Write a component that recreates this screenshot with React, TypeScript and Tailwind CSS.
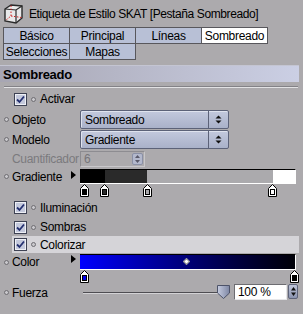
import { FunctionComponent } from "react";

const Dot: FunctionComponent = () => (
  <span className="inline-block w-[5px] h-[5px] rounded-full border border-[#6e6d72] bg-[#c9c8cc] shrink-0" />
);

const Check: FunctionComponent = () => (
  <svg width="13" height="13" viewBox="0 0 13 13" className="shrink-0">
    <rect x="0.5" y="0.5" width="12" height="12" fill="#c4c9dc" stroke="#3e4254" />
    <rect x="1.5" y="1.5" width="10" height="10" fill="none" stroke="#eef0f6" strokeWidth="1" />
    <path d="M3 6.5 L5.5 9 L10 3.5" fill="none" stroke="#243070" strokeWidth="1.8" />
  </svg>
);

const Arrows: FunctionComponent = () => (
  <svg width="7" height="9" viewBox="0 0 7 9">
    <path d="M3.5 0.5 L6.5 3.5 H0.5 Z" fill="#111" />
    <path d="M3.5 8.5 L6.5 5.5 H0.5 Z" fill="#111" />
  </svg>
);

const Knot: FunctionComponent<{ x: number; color: string }> = ({ x, color }) => (
  <svg
    width="9"
    height="13"
    viewBox="0 0 9 13"
    className="absolute top-0"
    style={{ left: x - 4 }}
  >
    <path d="M4.5 0.5 L8.5 4.5 V12.5 H0.5 V4.5 Z" fill="#fff" stroke="#000" />
    <rect x="2.5" y="5.5" width="4" height="5" fill={color} stroke="#000" />
  </svg>
);

const Select: FunctionComponent<{ value: string }> = ({ value }) => (
  <div className="flex h-[19px] w-[149px] border border-[#5c6278] rounded-[2px] bg-gradient-to-b from-[#c3c9dd] to-[#a9b1c9] shadow-[inset_1px_1px_0_#dfe3ee]">
    <div className="flex-1 flex items-center pl-[4px]">{value}</div>
    <div className="w-[20px] border-l border-[#5c6278] flex items-center justify-center">
      <Arrows />
    </div>
  </div>
);

const Label: FunctionComponent<{ text: string; dim?: boolean }> = ({ text, dim }) => (
  <div className="w-[80px] flex items-center gap-[3px] pl-[4px] shrink-0">
    {dim ? <span className="w-[5px]" /> : <Dot />}
    <span className={dim ? "text-[#7b7a7e]" : ""}>{text}</span>
  </div>
);

export default function App() {
  const tab =
    "h-[17px] w-[67px] -ml-px -mt-px border border-[#58575c] flex items-center justify-center";
  return (
    <div className="w-[303px] h-[314px] bg-[#acaaad] overflow-hidden text-[12px] leading-none tracking-[-0.3px] text-black font-['Liberation_Sans',sans-serif]">
      <div className="h-[27px] flex items-center pl-[3px] gap-[5px]">
        <svg width="21" height="21" viewBox="0 0 21 21">
          <path d="M2 6 L8 2 L19 3 L19 15 L13 20 L2 18 Z" fill="#e9e9ea" stroke="#2a2a2a" strokeWidth="1.4" />
          <path d="M2 6 L13 7 L19 3 M13 7 L13 20" fill="none" stroke="#2a2a2a" strokeWidth="1.2" />
          <path d="M8 2.5 L8 13 L2.5 17.5 M8 13 L18.5 14.5" fill="none" stroke="#d02020" strokeWidth="1" strokeDasharray="1.5 1.5" />
        </svg>
        <span className="text-[12px] tracking-[-0.4px]">Etiqueta de Estilo SKAT [Pestaña Sombreado]</span>
      </div>

      <div className="pl-[4px] pt-[1px] w-[272px] flex flex-wrap">
        <div className={`${tab} bg-[#b8c0d6]`}>Básico</div>
        <div className={`${tab} bg-[#b8c0d6]`}>Principal</div>
        <div className={`${tab} bg-[#b8c0d6]`}>Líneas</div>
        <div className={`${tab} bg-white`}>Sombreado</div>
        <div className={`${tab} bg-[#b8c0d6]`}>Selecciones</div>
        <div className={`${tab} bg-[#b8c0d6]`}>Mapas</div>
      </div>

      <div className="mt-[5px] h-[17px] w-[299px] flex items-center pl-[3px] font-bold text-[13px] bg-gradient-to-r from-[#a7a6b3] to-[#cbcfe4] border-t border-[#c4c5d2]">
        Sombreado
      </div>
      <div className="mt-[4px] ml-[4px] w-[294px] h-[2px] border-t border-[#838287] border-b border-b-[#e2e2e4]" />

      <div className="h-[22px] flex items-center pl-[14px] gap-[4px]">
        <Check />
        <Dot />
        <span>Activar</span>
      </div>

      <div className="h-[19px] flex items-center">
        <Label text="Objeto" />
        <Select value="Sombreado" />
      </div>
      <div className="mt-[1px] h-[19px] flex items-center">
        <Label text="Modelo" />
        <Select value="Gradiente" />
      </div>

      <div className="mt-[1px] h-[17px] flex items-center">
        <Label text="Cuantificador" dim />
        <div className="flex h-[16px] w-[65px] border border-[#8d8c91] border-b-[#c8c7ca] border-r-[#c8c7ca]">
          <div className="flex-1 pl-[3px] flex items-center text-[#76757a]">6</div>
          <div className="w-[11px] my-[1px] mr-[1px] rounded-[2px] bg-[#b3b8cc] border border-[#8a90a6] flex items-center justify-center">
            <svg width="5" height="8" viewBox="0 0 5 8">
              <path d="M2.5 0 L5 3 H0 Z M2.5 8 L5 5 H0 Z" fill="#59596a" />
            </svg>
          </div>
        </div>
      </div>

      <div className="mt-[2px] h-[15px] flex items-center">
        <div className="w-[80px] flex items-center gap-[3px] pl-[4px] shrink-0 relative">
          <Dot />
          <span>Gradiente</span>
          <svg width="5" height="8" viewBox="0 0 5 8" className="absolute left-[71px] top-[0px]">
            <path d="M0 0 L5 4 L0 8 Z" fill="#000" />
          </svg>
        </div>
        <div className="h-[15px] w-[216px] flex border-t border-black border-b border-b-white border-r border-r-white">
          <div className="w-[25px] bg-black" />
          <div className="w-[42px] bg-[#2a2a2a]" />
          <div className="w-[126px] bg-[#abaaad]" />
          <div className="flex-1 bg-white" />
        </div>
      </div>
      <div className="relative h-[13px]">
        <Knot x={84} color="#000" />
        <Knot x={104} color="#2a2a2a" />
        <Knot x={147} color="#abaaad" />
        <Knot x={272} color="#fff" />
      </div>

      <div className="h-[21px] flex items-center pl-[14px] gap-[4px]">
        <Check />
        <Dot />
        <span>Iluminación</span>
      </div>
      <div className="h-[18px] flex items-center pl-[14px] gap-[4px]">
        <Check />
        <Dot />
        <span>Sombras</span>
      </div>
      <div className="h-[17px] ml-[12px] w-[287px] bg-[#d5d4d8] flex items-center pl-[2px] gap-[4px]">
        <Check />
        <Dot />
        <span>Colorizar</span>
      </div>

      <div className="mt-[1px] h-[16px] flex items-center">
        <div className="w-[80px] flex items-center gap-[3px] pl-[4px] shrink-0 relative">
          <Dot />
          <span>Color</span>
          <svg width="5" height="8" viewBox="0 0 5 8" className="absolute left-[71px] top-[-1px]">
            <path d="M0 0 L5 4 L0 8 Z" fill="#000" />
          </svg>
        </div>
        <div className="relative h-[16px] w-[216px] border-t border-black border-b border-b-white border-r border-r-white bg-gradient-to-r from-[#0000ff] to-[#000008]">
          <div className="absolute left-[104px] top-[4px] w-[5px] h-[5px] rotate-45 bg-white border border-[#888]" />
        </div>
      </div>
      <div className="relative h-[13px]">
        <Knot x={84} color="#0000ee" />
        <Knot x={294} color="#000" />
      </div>

      <div className="h-[19px] flex items-center">
        <Label text="Fuerza" />
        <div className="relative w-[151px] h-[19px] flex items-center">
          <div className="ml-[3px] w-[137px] h-[2px] border-t border-[#4e4d52] border-b border-b-[#d3d2d5]" />
          <svg width="13" height="14" viewBox="0 0 13 14" className="absolute left-[137px] top-[2px]">
            <defs>
              <linearGradient id="th" x1="0" y1="0" x2="1" y2="0">
                <stop offset="0" stopColor="#c6cce0" />
                <stop offset="1" stopColor="#7d86a3" />
              </linearGradient>
            </defs>
            <path d="M0.5 0.5 H12.5 V8 L6.5 13.5 L0.5 8 Z" fill="url(#th)" stroke="#4d5369" />
          </svg>
          <div className="absolute left-[154px] top-[1px] w-[53px] h-[16px] bg-white border border-[#6d6c71] border-b-[#e6e6e8] border-r-[#e6e6e8] flex items-center pl-[3px]">
            100 %
          </div>
        </div>
      </div>
      <div className="relative">
        <div className="absolute left-[288px] top-[-18px] w-[10px] h-[15px] rounded-[2px] bg-gradient-to-b from-[#c0c6da] to-[#8a93ae] border border-[#5d6379] flex items-center justify-center">
          <svg width="5" height="9" viewBox="0 0 5 9">
            <path d="M2.5 0 L5 3.5 H0 Z M2.5 9 L5 5.5 H0 Z" fill="#111" />
          </svg>
        </div>
      </div>
    </div>
  );
}
